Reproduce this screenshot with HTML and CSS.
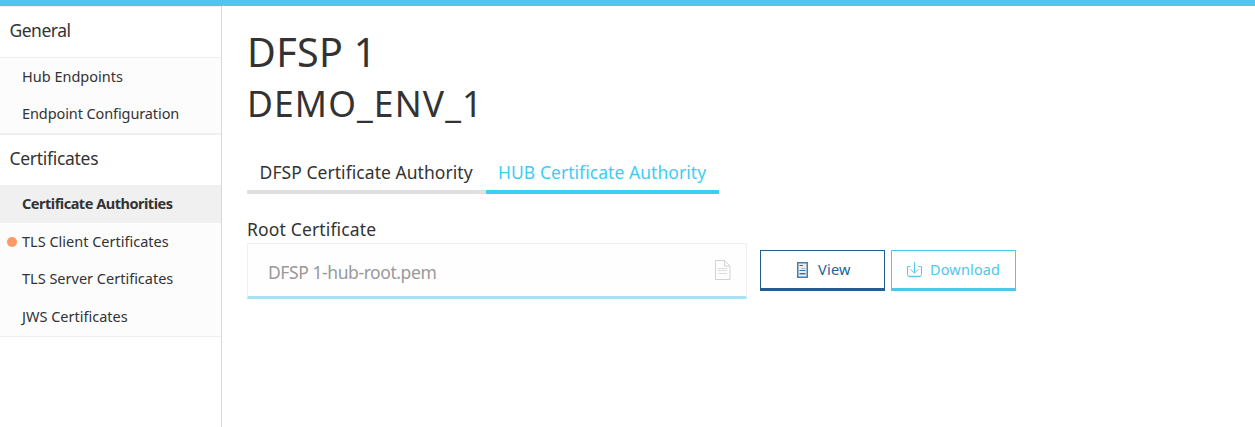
FILE: index.html
```html
<!DOCTYPE html>
<html lang="en">
<head>
<meta charset="utf-8">
<title>DFSP 1</title>
<link rel="stylesheet" href="styles.css">
</head>
<body>
<header class="topbar"></header>
<div class="layout">
  <nav class="sidebar">
    <section class="group">
      <h3 class="group-title"><span class="t-general">General</span></h3>
      <ul class="items">
        <li class="item"><span>Hub Endpoints</span></li>
        <li class="item"><span class="t-config">Endpoint Configuration</span></li>
      </ul>
    </section>
    <section class="group">
      <h3 class="group-title"><span class="t-certs">Certificates</span></h3>
      <ul class="items">
        <li class="item active"><span>Certificate Authorities</span></li>
        <li class="item low"><i class="dot"></i><span>TLS Client Certificates</span></li>
        <li class="item"><span>TLS Server Certificates</span></li>
        <li class="item low"><span>JWS Certificates</span></li>
      </ul>
    </section>
  </nav>
  <main class="content">
    <h1 class="title"><span class="t-title">DFSP 1</span></h1>
    <h2 class="subtitle"><span class="t-env">DEMO_ENV_1</span></h2>
    <div class="tabs">
      <div class="tab tab-dfsp"><span>DFSP Certificate Authority</span></div>
      <div class="tab tab-hub selected"><span>HUB Certificate Authority</span></div>
    </div>
    <label class="label"><span>Root Certificate</span></label>
    <div class="row">
      <div class="field">
        <span>DFSP 1-hub-root.pem</span>
        <svg class="file-icon" width="16" height="20" viewBox="0 0 16 20" fill="none" stroke="#d2d2d2">
          <path d="M.5.5h9l5.500 5.500v13.500H.5zM9.500.5v5.500H15"/>
          <path d="M3 8.500h9M3 10.500h9M3 13.500h9" stroke="#dcdcdc"/>
        </svg>
      </div>
      <button class="button view">
        <svg width="11" height="16" viewBox="0 0 11 16" fill="none" stroke="#4a7ea8">
          <path d="M.75.75h9.500v14.500H.75z" stroke-width="1.500" fill="#e8f0f6"/>
          <path d="M2.500 3.500h3.500M2.500 8.500h6M2.500 11.500h6" stroke="#326d9b"/>
          <path d="M4 6.500h4.500M2.500 12.500h6" stroke="#9dbbd1"/>
        </svg>
        <span>View</span>
      </button>
      <button class="button download">
        <svg width="15" height="16" viewBox="0 0 15 16" fill="none" stroke="#56cae8">
          <path d="M3.500 4.500h-3v8q0 2 2 2h10q2 0 2-2v-8h-3"/>
          <path d="M7.500 0v11M3.500 7.500l4 3.500 4-3.500"/>
          <path d="M2 14.500h11" stroke-width="1.500"/>
        </svg>
        <span>Download</span>
      </button>
    </div>
  </main>
</div>
</body>
</html>
```
FILE: styles.css
```css
* { box-sizing: border-box; }
body {
  margin: 0;
  background: #fff;
  color: #333;
  font-family: "Noto Sans", sans-serif;
  overflow: hidden;
}
h1, h2, h3, ul { margin: 0; padding: 0; font-weight: 400; list-style: none; }
span { white-space: nowrap; }
.topbar { height: 6px; background: #4fc7e7; }
.layout { display: flex; height: 421px; }
.sidebar { width: 222px; border-right: 1px solid #d9d9d9; }
.group { border-top: 1px solid #efefef; border-bottom: 1px solid #efefef; }
.group-title { height: 50px; padding-left: 9.5px; font-size: 17.5px; line-height: 46px; }
.t-general { letter-spacing: -0.5px; }
.t-certs { letter-spacing: -0.3px; }
.items { border-top: 1px solid #efefef; background: #fcfcfc; }
.item { position: relative; height: 37.5px; padding-left: 22px; font-size: 14.5px; line-height: 35px; }
.item:first-child { line-height: 37px; }
.low { line-height: 37px; }
.t-config { letter-spacing: -0.1px; }
.items .active { height: 37px; background: #f0f0f0; font-weight: 700; line-height: 35px; letter-spacing: -0.48px; }
.item:last-child { height: 38px; }
.group:first-child .item:last-child { height: 37.5px; }
.dot { position: absolute; left: 7px; top: 14px; width: 10px; height: 10px; border-radius: 50%; background: #ff9966; }
.content { flex: 1; padding: 20px 0 0 25px; }
.title { height: 52px; font-size: 39.5px; line-height: 52px; }
.subtitle { height: 51px; font-size: 35.5px; line-height: 51px; }
.t-title { letter-spacing: 0.3px; }
.t-env { letter-spacing: 1.1px; }
.tabs { display: flex; height: 44px; margin-top: 21px; }
.tab { padding-left: 12px; border-bottom: 4px solid #e0e0e0; font-size: 17.5px; line-height: 45px; letter-spacing: 0.05px; }
.tab-dfsp { width: 239px; padding-left: 12.6px; }
.tab-hub { width: 233px; }
.selected { color: #3dcdf5; border-color: #3dcdf5; }
.label { display: block; height: 49px; padding-top: 22px; font-size: 17.5px; line-height: 27px; letter-spacing: 0.15px; }
.row { display: flex; align-items: flex-start; }
.field {
  display: flex; justify-content: space-between;
  width: 500px; height: 56px; padding: 0 15px 0 20px;
  border: 1px solid #f0f0f0; border-bottom: 3px solid #a7e3f3;
  background: #fefefe; color: #999; font-size: 17.5px; line-height: 57px; letter-spacing: -0.42px;
}
.file-icon { margin-top: 16px; }
.button {
  display: flex; align-items: flex-start;
  width: 125px; height: 41px; margin: 7px 0 0 13px; padding: 11px 0 0 36px;
  border: 1px solid; border-bottom-width: 3px;
  background: #fff; font: 14.5px/15px "Noto Sans", sans-serif;
}
.view { color: #225f90; letter-spacing: 0.25px; }
.view span { margin-left: 10px; }
.download { margin-left: 6px; padding-left: 15px; color: #4fc7e7; letter-spacing: 0.15px; }
.download span { margin-left: 8px; }
```
